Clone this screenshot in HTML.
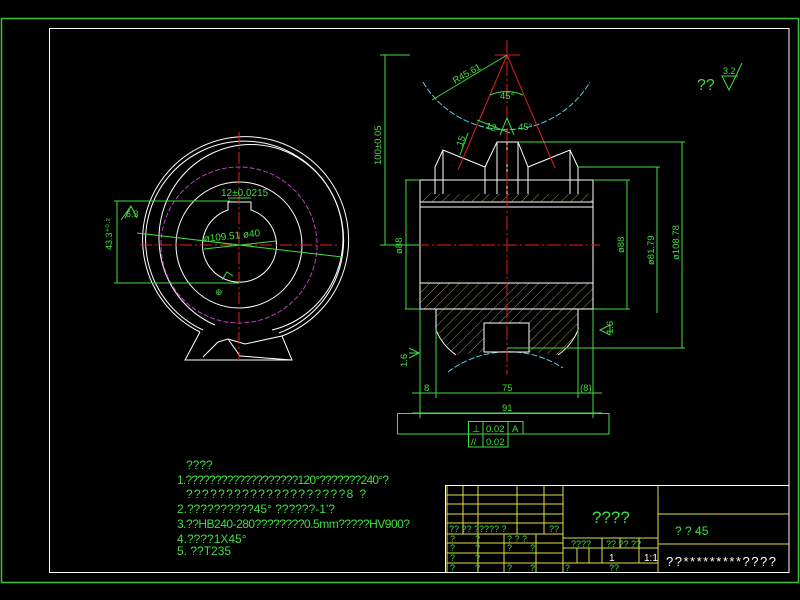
<!DOCTYPE html>
<html><head><meta charset="utf-8"><style>
html,body{margin:0;padding:0;background:#000;width:800px;height:600px;overflow:hidden}
svg{display:block}
text{font-family:"Liberation Sans Narrow","Liberation Sans",sans-serif}
</style></head><body>
<svg width="800" height="600" viewBox="0 0 800 600" xmlns="http://www.w3.org/2000/svg">
<defs>
<pattern id="h" patternUnits="userSpaceOnUse" width="7" height="7" patternTransform="rotate(45)">
<line x1="0" y1="0" x2="0" y2="7" stroke="#d8d860" stroke-width="0.7"/>
</pattern>
</defs>
<rect x="1.5" y="18.5" width="797" height="564" fill="none" stroke="#3fbf3f" stroke-width="1.5"/>
<rect x="49.5" y="28.5" width="739.5" height="544" fill="none" stroke="#fff" stroke-width="1"/>

<!-- LEFT VIEW -->
<g fill="none" stroke="#fff" stroke-width="1">
<path d="M200 332 A103 103 0 1 1 282 336"/>
<path d="M203 330 A99 99 0 1 1 279 333"/>
<path d="M215 325 A92 94 0 1 1 272 330"/>
<circle cx="239" cy="245" r="63"/>
<path d="M228 202 L228 210 A37 37 0 1 0 251 210 L251 202 Z"/>
<path d="M200 332 L185 360 L292 360 L282 336 L245 344 L228 339 L218 342 L203 357"/>
<path d="M228 339 L240 356 L292 360"/>
</g>
<circle cx="239" cy="245" r="78" fill="none" stroke="#c040c0" stroke-dasharray="5,2" stroke-width="1"/>
<g stroke="#e02020" stroke-width="1" stroke-dasharray="12,3,2,3">
<line x1="239" y1="132" x2="239" y2="360"/>
<line x1="140" y1="245" x2="340" y2="245"/>
</g>
<g stroke="#3fdf3f" stroke-width="1" fill="none">
<line x1="114" y1="201" x2="230" y2="201"/>
<line x1="114" y1="283" x2="239" y2="283"/>
<line x1="117" y1="201" x2="117" y2="283"/>
<line x1="137" y1="233" x2="342" y2="257"/>
<line x1="204" y1="249" x2="276" y2="241"/>
<line x1="228" y1="198" x2="251" y2="198"/>
<path d="M125 218 L131 206 L137 218 M131 206 L121 220"/>
<path d="M222 280 L227 272 L233 276"/>
</g>
<g fill="#3fdf3f" font-size="10">
<text x="221" y="196">12±0.0215</text>
<text x="204" y="242" transform="rotate(-6 204 242)">ø109.51 ø40</text>
<text x="126" y="217" font-size="9">6.3</text>
<text x="112" y="250" transform="rotate(-90 112 250)" font-size="9">43.3⁺⁰·²</text>
<text x="215" y="295" font-size="9">⊕</text>
</g>

<!-- RIGHT VIEW -->
<g fill="none" stroke="#4fd0e0" stroke-width="1" stroke-dasharray="6,2">
<path d="M423 82 A97 97 0 0 0 590 82"/>
<path d="M448 372 A100 100 0 0 1 563 368"/>
</g>
<rect x="420" y="194" width="173" height="8" fill="url(#h)"/>
<path d="M420 283 H593 V309 H578 L578 330 Q572 345 558 355 L529 352 V323 H484 V352 L456 355 Q442 345 436 330 V309 H420 Z" fill="url(#h)"/>
<g fill="none" stroke="#fff" stroke-width="1">
<rect x="420" y="180" width="173" height="129"/>
<line x1="420" y1="202" x2="593" y2="202"/>
<line x1="420" y1="207" x2="593" y2="207"/>
<line x1="420" y1="283" x2="593" y2="283"/>
<path d="M435 194 L435 167 L443 150 L485 167 L485 194 M485 167 L497 142 L497 194 M497 142 L518 142 L528 167 L528 194 M518 142 L518 194 M528 167 L570 150 L578 167 L578 194 M570 150 L570 194 M443 150 L443 194 M507 142 L507 194"/>
<path d="M436 309 L436 330 Q442 345 456 355 M578 309 L578 330 Q572 345 558 355"/>
<rect x="484" y="323" width="45" height="29"/>
</g>
<g stroke="#e02020" stroke-width="1">
<line x1="507" y1="40" x2="507" y2="375" stroke-dasharray="14,3,2,3"/>
<line x1="495" y1="55" x2="520" y2="55"/>
<line x1="507" y1="55" x2="458" y2="170"/>
<line x1="507" y1="55" x2="555" y2="168"/>
<line x1="415" y1="245" x2="600" y2="245" stroke-dasharray="14,3,2,3"/>
</g>
<g stroke="#3fdf3f" stroke-width="1" fill="none">
<line x1="380" y1="55" x2="410" y2="55"/><line x1="385" y1="55" x2="385" y2="245"/><line x1="380" y1="245" x2="420" y2="245"/>
<line x1="432" y1="100" x2="507" y2="55"/>
<path d="M490 95 Q507 88 523 95"/>
<path d="M477 120 L510 133"/>
<line x1="468" y1="133" x2="460" y2="155"/>
<path d="M507 118 L500 135 M507 118 L514 135"/>
<line x1="405" y1="180" x2="420" y2="180"/><line x1="405" y1="309" x2="420" y2="309"/><line x1="406" y1="180" x2="406" y2="309"/>
<line x1="593" y1="180" x2="630" y2="180"/><line x1="593" y1="309" x2="630" y2="309"/><line x1="627" y1="180" x2="627" y2="309"/>
<line x1="578" y1="167" x2="660" y2="167"/><line x1="657" y1="167" x2="657" y2="313"/>
<line x1="518" y1="142" x2="685" y2="142"/><line x1="578" y1="348" x2="685" y2="348"/><line x1="682" y1="142" x2="682" y2="348"/><line x1="507" y1="348" x2="578" y2="348"/>
<line x1="420" y1="309" x2="420" y2="418"/><line x1="593" y1="309" x2="593" y2="418"/>
<line x1="436" y1="330" x2="436" y2="398"/><line x1="578" y1="330" x2="578" y2="398"/>
<line x1="412" y1="393" x2="602" y2="393"/>
<line x1="412" y1="413" x2="602" y2="413"/>
<rect x="397.5" y="413.5" width="211.5" height="20.5"/>
<rect x="468.5" y="421.5" width="54.5" height="12.5"/>
<rect x="468.5" y="434" width="39.5" height="13"/>
<line x1="483" y1="421" x2="483" y2="447"/><line x1="508" y1="421" x2="508" y2="434"/>
<path d="M409 358 L419 353 L409 348 M409 353 L419 353"/>
<path d="M600 330 L610 325 L610 335 Z"/>
<path d="M722 76 L729 90 L736 76 Z M722 76 L738 76 M734 80 L742 63"/>
</g>
<g fill="#3fdf3f" font-size="9.5">
<text x="455" y="84" transform="rotate(-30 455 84)">R45.61</text>
<text x="500" y="99">45°</text>
<text x="485" y="128" transform="rotate(20 485 128)">12</text>
<text x="518" y="130">45°</text>
<text x="462" y="147" transform="rotate(-70 462 147)">15</text>
<text x="381" y="165" transform="rotate(-90 381 165)">100±0.05</text>
<text x="402" y="254" transform="rotate(-90 402 254)">ø88</text>
<text x="624" y="253" transform="rotate(-90 624 253)">ø88</text>
<text x="654" y="265" transform="rotate(-90 654 265)">ø81.79</text>
<text x="679" y="260" transform="rotate(-90 679 260)">ø108.78</text>
<text x="407" y="367" transform="rotate(-90 407 367)">1.6</text>
<text x="613" y="334" transform="rotate(-90 613 334)">1.6</text>
<text x="424" y="391">8</text>
<text x="502" y="391">75</text>
<text x="580" y="391">(8)</text>
<text x="502" y="411">91</text>
<text x="472" y="432">⊥</text>
<text x="486" y="432">0.02</text>
<text x="512" y="432">A</text>
<text x="471" y="445">//</text>
<text x="486" y="445">0.02</text>
<text x="697" y="90" font-size="16">??</text>
<text x="723" y="74" font-size="9">3.2</text>
</g>

<!-- NOTES -->
<g fill="#3fdf3f" font-size="12">
<text x="186" y="469">????</text>
<text x="177" y="484" textLength="212">1.???????????????????120°???????240°?</text>
<text x="186" y="498" textLength="180">????????????????????8 ?</text>
<text x="177" y="513">2.??????????45°   ??????-1'?</text>
<text x="177" y="528" textLength="233">3.??HB240-280????????0.5mm?????HV900?</text>
<text x="177" y="543">4.????1X45°</text>
<text x="177" y="555">5. ??T235</text>
</g>

<!-- TITLE BLOCK -->
<rect x="445.5" y="485.5" width="343.5" height="87" fill="#000" stroke="#fff" stroke-width="1"/>
<g stroke="#e0e040" stroke-width="1" fill="none">
<line x1="447" y1="486" x2="447" y2="572"/>
<line x1="463" y1="486" x2="463" y2="534"/><line x1="478" y1="486" x2="478" y2="572"/>
<line x1="517" y1="486" x2="517" y2="534"/><line x1="544" y1="486" x2="544" y2="534"/>
<line x1="563" y1="486" x2="563" y2="572"/><line x1="658" y1="486" x2="658" y2="572"/>
<line x1="504" y1="534" x2="504" y2="572"/><line x1="536" y1="534" x2="536" y2="572"/>
<line x1="447" y1="495" x2="563" y2="495"/><line x1="447" y1="504" x2="563" y2="504"/>
<line x1="447" y1="514" x2="563" y2="514"/><line x1="447" y1="523" x2="563" y2="523"/>
<line x1="447" y1="534" x2="563" y2="534"/><line x1="447" y1="543" x2="563" y2="543"/>
<line x1="447" y1="553" x2="563" y2="553"/><line x1="447" y1="563" x2="658" y2="563"/>
<line x1="563" y1="538" x2="658" y2="538"/><line x1="563" y1="548" x2="658" y2="548"/>
<line x1="577" y1="548" x2="577" y2="563"/><line x1="589" y1="548" x2="589" y2="563"/>
<line x1="602" y1="538" x2="602" y2="563"/><line x1="620" y1="538" x2="620" y2="548"/>
<line x1="639" y1="538" x2="639" y2="563"/>
<line x1="658" y1="514" x2="789" y2="514"/><line x1="658" y1="544" x2="789" y2="544"/>
</g>
<g fill="#3fdf3f" font-size="9">
<text x="449" y="532">?? ?? ????? ?</text><text x="549" y="532">??</text>
<text x="450" y="542">?</text><text x="475" y="542">?</text><text x="507" y="542">? ? ?</text>
<text x="450" y="551">?</text><text x="475" y="551">?</text><text x="507" y="551">?</text><text x="530" y="551">?</text>
<text x="450" y="561">?</text><text x="475" y="561">?</text>
<text x="450" y="571">?</text><text x="475" y="571">?</text><text x="507" y="571">?</text><text x="530" y="571">?</text>
<text x="565" y="571">?</text><text x="609" y="571">??</text>
<text x="571" y="547">????</text><text x="606" y="547">?? ?? ??</text>
<text x="592" y="523" font-size="17">????</text>
<text x="675" y="535" font-size="12">?   ? 45</text>
</g>
<g fill="#fff" font-size="10">
<text x="609" y="561">1</text><text x="644" y="561">1:1</text>
<text x="666" y="566" font-size="13" textLength="110">??*********????</text>
</g>
</svg>
</body></html>
